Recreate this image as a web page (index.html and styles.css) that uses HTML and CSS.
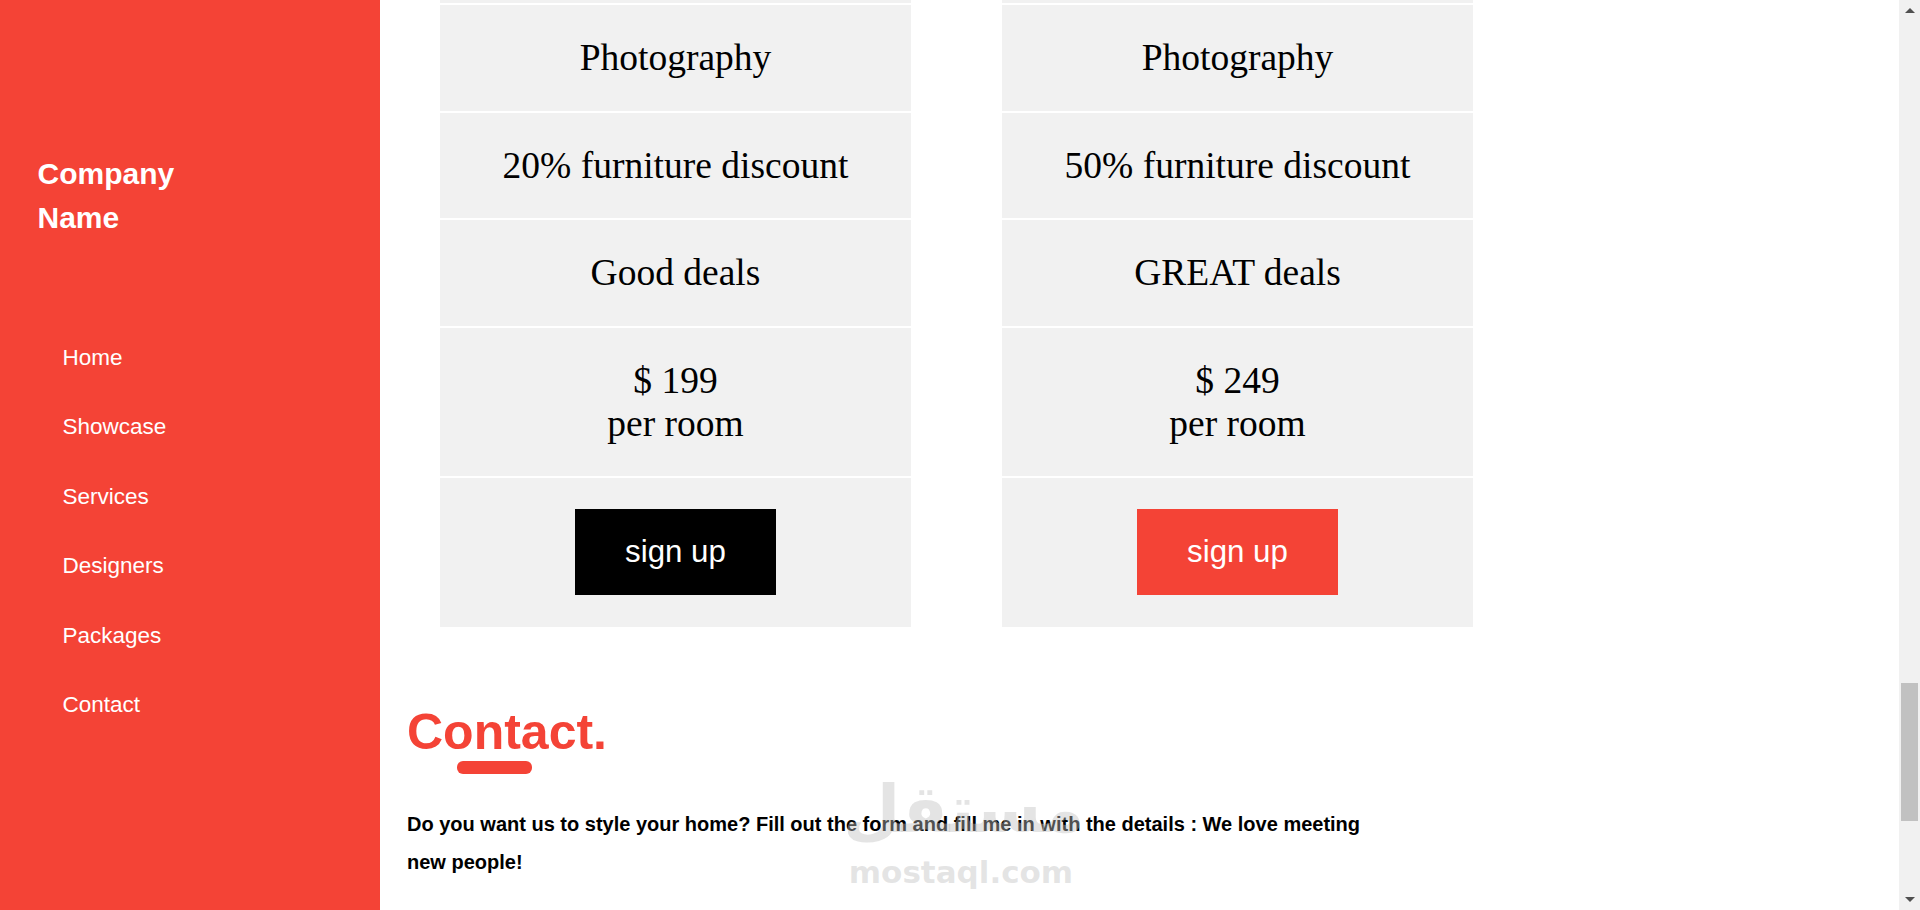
FILE: index.html
```html
<!DOCTYPE html>
<html lang="en">
<head>
<meta charset="utf-8">
<title>Company Name</title>
<link rel="stylesheet" href="styles.css">
</head>
<body>
<div class="page">
  <nav class="sidebar">
    <h3 class="brand">Company<br>Name</h3>
    <ul class="nav">
      <li><a href="#">Home</a></li>
      <li><a href="#">Showcase</a></li>
      <li><a href="#">Services</a></li>
      <li><a href="#">Designers</a></li>
      <li><a href="#">Packages</a></li>
      <li><a href="#">Contact</a></li>
    </ul>
  </nav>
  <main class="main">
    <section class="packages">
      <ul class="plan">
        <li class="sliver"></li>
        <li class="cell">Photography</li>
        <li class="cell">20% furniture discount</li>
        <li class="cell">Good deals</li>
        <li class="cell">$ 199<br>per room</li>
        <li class="cell"><button class="btn btn-black">sign up</button></li>
      </ul>
      <ul class="plan">
        <li class="sliver"></li>
        <li class="cell">Photography</li>
        <li class="cell">50% furniture discount</li>
        <li class="cell">GREAT deals</li>
        <li class="cell">$ 249<br>per room</li>
        <li class="cell"><button class="btn btn-red">sign up</button></li>
      </ul>
    </section>
    <section class="contact">
      <h1 class="contact-title">Contact.</h1>
      <div class="title-bar"></div>
      <p class="contact-text">Do you want us to style your home? Fill out the form and fill me in with the details : We love meeting new people!</p>
    </section>
    <div class="watermark">
      <div class="wm-logo">مستقل</div>
      <div class="wm-text">mostaql.com</div>
    </div>
  </main>
  <div class="scrollbar">
    <div class="arrow arrow-up"></div>
    <div class="track">
      <div class="thumb"></div>
    </div>
    <div class="arrow arrow-down"></div>
  </div>
</div>
</body>
</html>
```
FILE: styles.css
```css
* { box-sizing: border-box; }
html, body { margin: 0; padding: 0; height: 910px; overflow: hidden; background: #fff; }
body { font-family: "Liberation Sans", Arial, sans-serif; }

.page { display: flex; height: 910px; }

.sidebar {
  width: 380px;
  flex-shrink: 0;
  background: #f44336;
  color: #fff;
}
.brand {
  margin: 0;
  padding: 152px 0 0 37.5px;
  font-size: 30px;
  line-height: 44px;
  font-weight: bold;
}
.nav { list-style: none; margin: 82.8px 0 0; padding: 0; }
.nav li a {
  display: block;
  padding: 18px 0 18px 62.5px;
  font-size: 22.5px;
  line-height: 33.5px;
  color: #fff;
  text-decoration: none;
}

.main {
  flex: 1;
  position: relative;
  padding-left: 27px;
}

.packages { display: flex; gap: 91px; padding-left: 33px; }
.plan {
  list-style: none;
  margin: 0;
  padding: 0;
  width: 471px;
  background: #f1f1f1;
  font-family: "Liberation Serif", "Times New Roman", serif;
  font-size: 37.5px;
  line-height: 43px;
  text-align: center;
  color: #000;
}
.plan li { border-bottom: 2px solid #fff; }
.plan li:last-child { border-bottom: 0; }
.plan .sliver { height: 5px; }
.plan .cell { padding: 31.25px 0; }

.btn {
  border: 0;
  margin: 0;
  padding: 25px 50px;
  font-family: "Liberation Sans", Arial, sans-serif;
  font-size: 31.25px;
  line-height: 36px;
  color: #fff;
  vertical-align: top;
}
.btn-black { background: #000; }
.btn-red { background: #f44336; }

.contact { padding-top: 77.2px; }
.contact-title {
  margin: 0;
  font-size: 50px;
  line-height: 57.5px;
  font-weight: bold;
  color: #f44336;
}
.title-bar {
  width: 75px;
  height: 12.5px;
  margin-left: 50px;
  border-radius: 6px;
  background: #f44336;
}
.contact-text {
  margin: 32.6px 0 0;
  max-width: 975px;
  font-size: 20px;
  line-height: 37.5px;
  font-weight: bold;
  color: #000;
}

.watermark {
  position: absolute;
  left: 463px;
  top: 770px;
  width: 236px;
  text-align: center;
  color: rgba(190, 190, 190, 0.42);
  font-family: "DejaVu Sans", sans-serif;
  font-weight: bold;
  pointer-events: none;
}
.wm-logo { font-size: 66px; line-height: 80px; }
.wm-text { font-size: 31px; line-height: 44px; }

.scrollbar {
  width: 21px;
  flex-shrink: 0;
  background: #f1f1f1;
  display: flex;
  flex-direction: column;
  align-items: center;
}
.arrow { width: 0; height: 0; border-left: 5px solid transparent; border-right: 5px solid transparent; }
.arrow-up { margin-top: 8px; border-bottom: 5px solid #505050; }
.arrow-down { margin-bottom: 8px; border-top: 5px solid #505050; }
.track { flex: 1; width: 100%; padding: 670px 2px 0 2px; }
.thumb { width: 17px; height: 138px; background: #c1c1c1; }
```
